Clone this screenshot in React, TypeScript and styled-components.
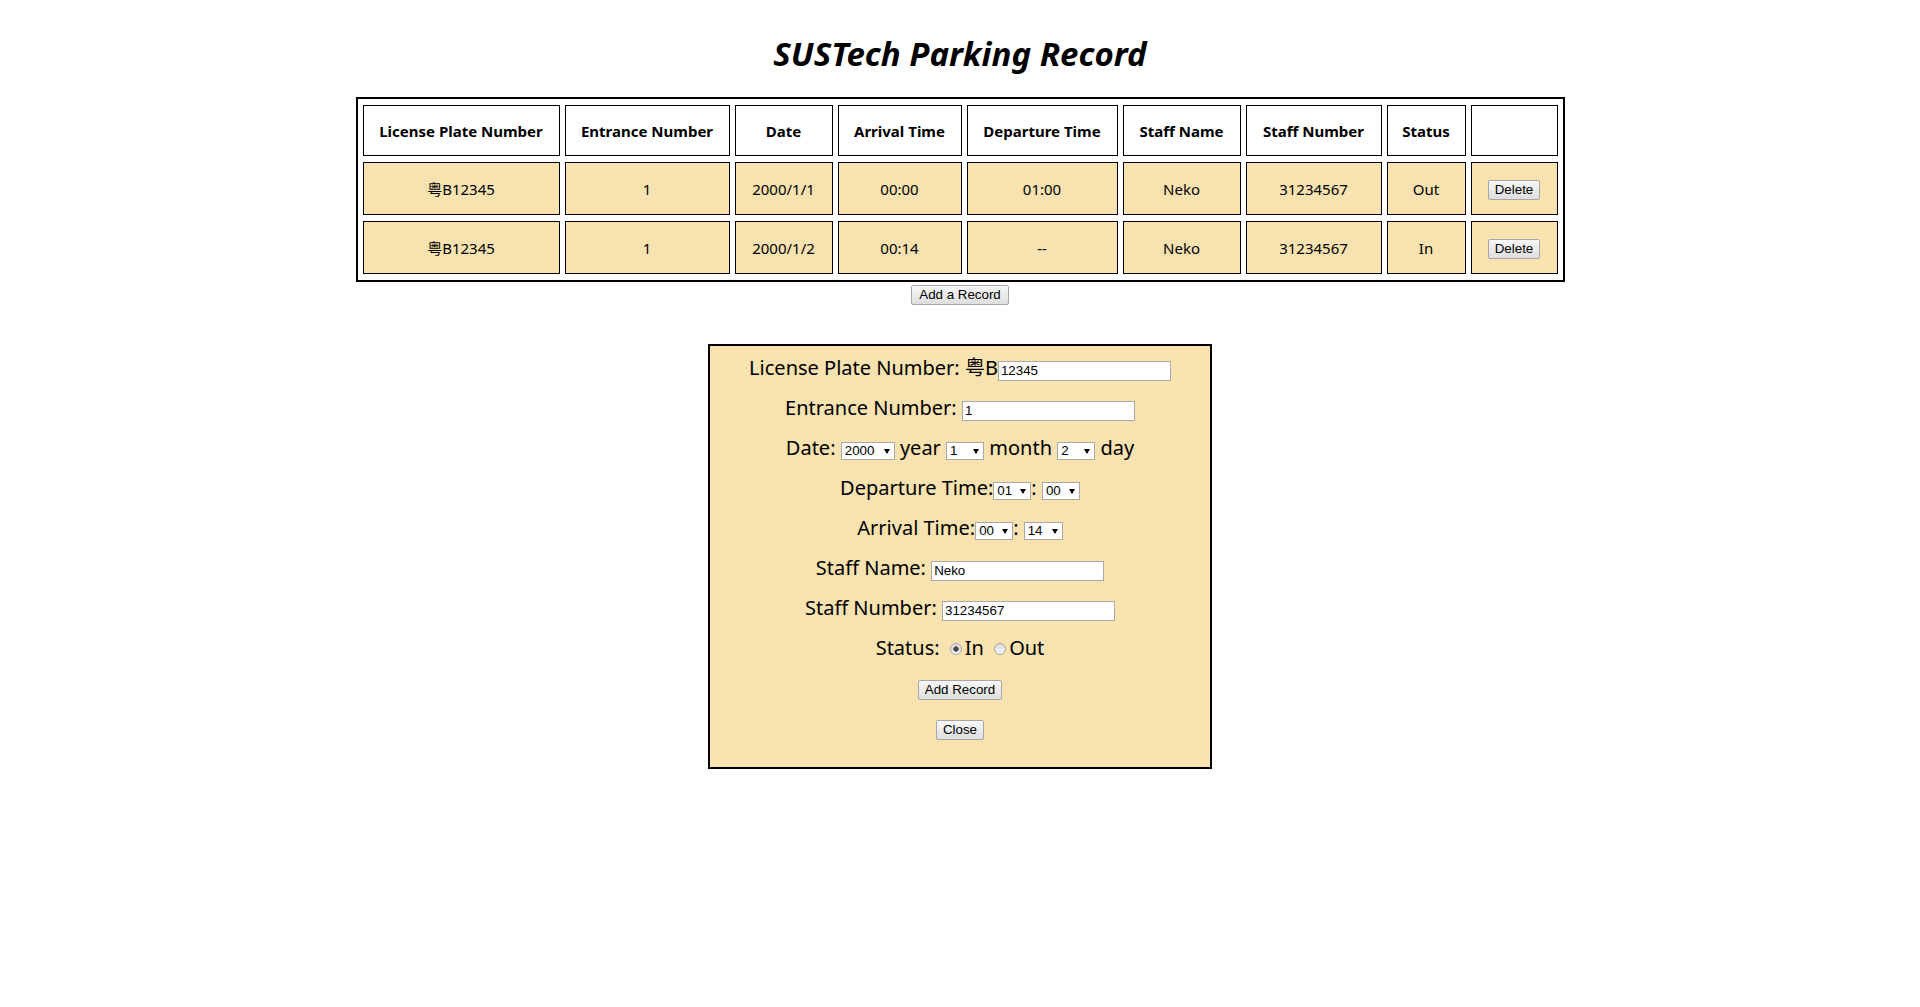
import React, { useState } from "react"
import styled, { createGlobalStyle } from "styled-components"

const GlobalStyle = createGlobalStyle`
  html, body {
    margin: 0;
    padding: 0;
    background: #ffffff;
  }
  body {
    font-family: "Noto Sans", "Noto Sans CJK SC", sans-serif;
    color: #000000;
  }
`

const WHEAT = "#f7e2b0"
const CONTROL_FONT = `"Liberation Sans", Arial, sans-serif`

const Page = styled.div`
  display: flex;
  flex-direction: column;
  align-items: center;
  padding-top: 32px;
`

const Title = styled.h1`
  margin: 0;
  font-size: 33px;
  font-weight: 700;
  font-style: italic;
  line-height: 44px;
`

const RecordTable = styled.table`
  margin-top: 21px;
  width: 1209px;
  table-layout: fixed;
  border: 2px solid #000000;
  border-collapse: separate;
  border-spacing: 5px 6px;
  background: #ffffff;
`

const Col = styled.col<{ $w: number }>`
  width: ${(p) => p.$w}px;
`

const HeadCell = styled.th`
  box-sizing: border-box;
  height: 51px;
  padding: 0;
  border: 1px solid #000000;
  background: #ffffff;
  font-size: 15px;
  font-weight: 700;
  text-align: center;
  vertical-align: middle;
`

const Cell = styled.td`
  box-sizing: border-box;
  height: 53px;
  padding: 0;
  border: 1px solid #000000;
  background: ${WHEAT};
  font-size: 15px;
  text-align: center;
  vertical-align: middle;
`

const Button = styled.button`
  box-sizing: border-box;
  height: 20px;
  margin: 0;
  padding: 0 6px;
  border: 1px solid #a6a6a6;
  border-radius: 2px;
  background: linear-gradient(#f7f7f7, #dedede);
  color: #000000;
  font-family: ${CONTROL_FONT};
  font-size: 13.33px;
  line-height: 18px;
  cursor: pointer;
`

const AddRecordButton = styled(Button)`
  margin-top: 3px;
  padding: 0 7px;
`

const FormBox = styled.div`
  box-sizing: border-box;
  width: 504px;
  margin-top: 39px;
  padding: 2px 0 19px;
  border: 2px solid #000000;
  background: ${WHEAT};
  display: flex;
  flex-direction: column;
`

const FormRow = styled.div`
  height: 40px;
  line-height: 40px;
  font-size: 20px;
  text-align: center;
  white-space: nowrap;
`

const ButtonRow = styled.div`
  height: 40px;
  display: flex;
  align-items: center;
  justify-content: center;
  padding-top: 3px;
  box-sizing: border-box;
`

const TextInput = styled.input`
  box-sizing: border-box;
  width: 173px;
  height: 20px;
  margin: 0;
  padding: 1px 2px;
  border: 1px solid #a9a9a9;
  background: #ffffff;
  color: #000000;
  font-family: ${CONTROL_FONT};
  font-size: 13.33px;
  vertical-align: baseline;
  outline: none;
`

const SelectWrap = styled.span<{ $w: number }>`
  position: relative;
  display: inline-flex;
  width: ${(p) => p.$w}px;
  height: 18px;
  line-height: normal;
  vertical-align: baseline;

  &::after {
    content: "";
    position: absolute;
    right: 5px;
    top: 7px;
    border-left: 3.5px solid transparent;
    border-right: 3.5px solid transparent;
    border-top: 5px solid #000000;
    pointer-events: none;
  }
`

const Select = styled.select`
  appearance: none;
  box-sizing: border-box;
  width: 100%;
  height: 18px;
  margin: 0;
  padding: 0 0 0 3px;
  border: 1px solid #a9a9a9;
  border-radius: 0;
  background: #ffffff;
  color: #000000;
  font-family: ${CONTROL_FONT};
  font-size: 13.33px;
  outline: none;
`

const Radio = styled.input.attrs({ type: "radio" })`
  appearance: none;
  box-sizing: border-box;
  width: 12px;
  height: 12px;
  margin: 3px 3px 0 5px;
  border: 1px solid #a8a8a8;
  border-radius: 50%;
  background: linear-gradient(#dcdcdc, #f5f5f5);
  vertical-align: baseline;

  &:checked {
    background: radial-gradient(circle, #4a4a4a 0 2.4px, transparent 3px),
      linear-gradient(#dcdcdc, #f5f5f5);
  }
`

type ParkingRecord = {
  plate: string
  entrance: string
  date: string
  arrival: string
  departure: string
  staffName: string
  staffNumber: string
  status: string
}

const columns = [
  { title: "License Plate Number", width: 197 },
  { title: "Entrance Number", width: 165 },
  { title: "Date", width: 98 },
  { title: "Arrival Time", width: 124 },
  { title: "Departure Time", width: 151 },
  { title: "Staff Name", width: 118 },
  { title: "Staff Number", width: 136 },
  { title: "Status", width: 79 },
  { title: "", width: 87 },
]

const initialRecords: ParkingRecord[] = [
  {
    plate: "粤B12345",
    entrance: "1",
    date: "2000/1/1",
    arrival: "00:00",
    departure: "01:00",
    staffName: "Neko",
    staffNumber: "31234567",
    status: "Out",
  },
  {
    plate: "粤B12345",
    entrance: "1",
    date: "2000/1/2",
    arrival: "00:14",
    departure: "--",
    staffName: "Neko",
    staffNumber: "31234567",
    status: "In",
  },
]

const range = (from: number, to: number, pad = false) =>
  Array.from({ length: to - from + 1 }, (_, i) => {
    const n = from + i
    return pad ? String(n).padStart(2, "0") : String(n)
  })

const years = range(2000, 2030)
const months = range(1, 12)
const days = range(1, 31)
const hours = range(0, 23, true)
const minutes = range(0, 59, true)

const Dropdown: React.FC<{ width: number; options: string[]; value: string }> = ({ width, options, value }) => {
  const [current, setCurrent] = useState(value)
  return (
    <SelectWrap $w={width}>
      <Select value={current} onChange={(e) => setCurrent(e.target.value)}>
        {options.map((o) => (
          <option key={o} value={o}>
            {o}
          </option>
        ))}
      </Select>
    </SelectWrap>
  )
}

const App: React.FC = () => {
  const [records, setRecords] = useState<ParkingRecord[]>(initialRecords)
  const [showForm, setShowForm] = useState(true)

  const deleteRecord = (index: number) => {
    setRecords(records.filter((_, i) => i !== index))
  }

  return (
    <Page>
      <GlobalStyle />
      <Title>SUSTech Parking Record</Title>

      <RecordTable>
        <colgroup>
          {columns.map((c, i) => (
            <Col key={i} $w={c.width} />
          ))}
        </colgroup>
        <thead>
          <tr>
            {columns.map((c, i) => (
              <HeadCell key={i}>{c.title}</HeadCell>
            ))}
          </tr>
        </thead>
        <tbody>
          {records.map((r, i) => (
            <tr key={i}>
              <Cell>{r.plate}</Cell>
              <Cell>{r.entrance}</Cell>
              <Cell>{r.date}</Cell>
              <Cell>{r.arrival}</Cell>
              <Cell>{r.departure}</Cell>
              <Cell>{r.staffName}</Cell>
              <Cell>{r.staffNumber}</Cell>
              <Cell>{r.status}</Cell>
              <Cell>
                <Button onClick={() => deleteRecord(i)}>Delete</Button>
              </Cell>
            </tr>
          ))}
        </tbody>
      </RecordTable>

      <AddRecordButton onClick={() => setShowForm(true)}>Add a Record</AddRecordButton>

      {showForm && (
        <FormBox>
          <FormRow>
            License Plate Number: 粤B<TextInput defaultValue="12345" />
          </FormRow>
          <FormRow>
            Entrance Number: <TextInput defaultValue="1" />
          </FormRow>
          <FormRow>
            Date: <Dropdown width={54} options={years} value="2000" /> year{" "}
            <Dropdown width={38} options={months} value="1" /> month{" "}
            <Dropdown width={38} options={days} value="2" /> day
          </FormRow>
          <FormRow>
            Departure Time:<Dropdown width={38} options={hours} value="01" />:{" "}
            <Dropdown width={38} options={minutes} value="00" />
          </FormRow>
          <FormRow>
            Arrival Time:<Dropdown width={38} options={hours} value="00" />:{" "}
            <Dropdown width={39} options={minutes} value="14" />
          </FormRow>
          <FormRow>
            Staff Name: <TextInput defaultValue="Neko" />
          </FormRow>
          <FormRow>
            Staff Number: <TextInput defaultValue="31234567" />
          </FormRow>
          <FormRow>
            Status: <Radio name="status" defaultChecked />In <Radio name="status" />Out
          </FormRow>
          <ButtonRow>
            <Button>Add Record</Button>
          </ButtonRow>
          <ButtonRow>
            <Button onClick={() => setShowForm(false)}>Close</Button>
          </ButtonRow>
        </FormBox>
      )}
    </Page>
  )
}

export default App
